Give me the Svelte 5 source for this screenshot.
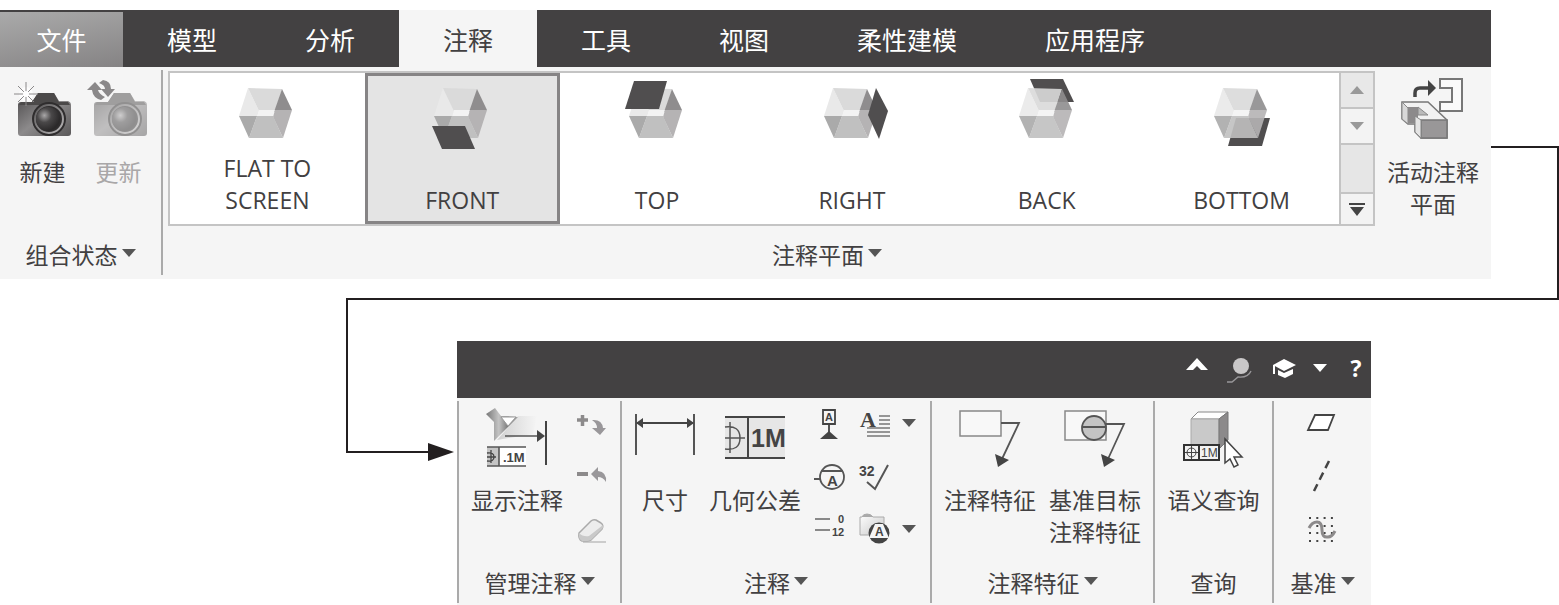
<script>
  const tabs = ["模型", "分析", "注释", "工具", "视图", "柔性建模", "应用程序"];

  // panel is the dark face, behind = drawn under the cube
  const planes = [
    { name: "FLAT TO SCREEN" },
    { name: "FRONT", panel: "6,50 39,50 49,73 16,73" },
    { name: "TOP", panel: "13,5 46,5 38,33 4,33" },
    { name: "RIGHT", panel: "60,12 72,35 63,63 52,39" },
    { name: "BACK", panel: "19,3 52,3 63,26 29,26", behind: true },
    { name: "BOTTOM", panel: "30,42 64,42 56,70 22,70", behind: true },
  ];

  let activeTab = $state("注释");
  let activePlane = $state("FRONT");
</script>

{#snippet caret()}
  <svg class="caret" viewBox="0 0 14 8"><path d="M0 0H14L7 8Z" /></svg>
{/snippet}

{#snippet caption(text, menu = true)}
  {#if menu}
    <button class="caption">{text}{@render caret()}</button>
  {:else}
    <div class="caption">{text}</div>
  {/if}
{/snippet}

{#snippet camera()}
  <path d="M7 29Q7 26 10 26H21L27 17H43L48 25H57Q60 26 60 29V57Q60 60 57 60H10Q7 60 7 57Z" fill="url(#camBody)" />
  <path d="M27 17H43L48 26H57L59 29H8L10 26H21Z" fill="#4b4949" />
  <circle cx="38" cy="43" r="17" fill="#2f2d2e" />
  <circle cx="38" cy="43" r="14" fill="none" stroke="url(#rim)" stroke-width="2" />
  <circle cx="37" cy="43" r="12" fill="url(#lens)" />
{/snippet}

<svg class="defs" aria-hidden="true">
  <defs>
    <linearGradient id="camBody" x1="0" y1="0" x2="1" y2="1">
      <stop offset="0" stop-color="#4a4849" />
      <stop offset="0.5" stop-color="#8c8a8b" />
      <stop offset="1" stop-color="#5a5859" />
    </linearGradient>
    <linearGradient id="rim" x1="0" y1="0" x2="1" y2="1">
      <stop offset="0" stop-color="#5a5859" />
      <stop offset="1" stop-color="#b9b7b8" />
    </linearGradient>
    <radialGradient id="lens" cx="0.35" cy="0.35" r="0.65">
      <stop offset="0" stop-color="#a9a7a8" />
      <stop offset="0.45" stop-color="#4a4849" />
      <stop offset="1" stop-color="#2b292a" />
    </radialGradient>
    <linearGradient id="torch">
      <stop offset="0" stop-color="#777" />
      <stop offset="0.4" stop-color="#c4c4c4" />
      <stop offset="0.7" stop-color="#777" />
      <stop offset="1" stop-color="#aaa" />
    </linearGradient>
    <linearGradient id="beam">
      <stop offset="0" stop-color="#d0d0d0" />
      <stop offset="1" stop-color="#f5f5f5" />
    </linearGradient>
    <linearGradient id="folder" x1="0" y1="0" x2="1" y2="1">
      <stop offset="0" stop-color="#fff" />
      <stop offset="1" stop-color="#c8c8c8" />
    </linearGradient>
  </defs>
</svg>

<div class="upper">
  <section class="ribbon">
    <nav class="bar">
      <button class="tab file">文件</button>
      {#each tabs as tab}
        <button class="tab" class:active={tab === activeTab} onclick={() => (activeTab = tab)}>{tab}</button>
      {/each}
    </nav>

    <div class="body">
      <div class="group states">
        <div class="tools">
          <button class="big">
            <svg viewBox="0 0 64 64" width="64" height="64">
              {@render camera()}
              <circle cx="15" cy="18" r="7" fill="#fff" opacity="0.8" />
              <path d="M15 6V30M3 18H27M7 10L23 26M23 10L7 26" stroke="#8a8889" stroke-width="1" />
              <circle cx="15" cy="18" r="3" fill="#fff" />
            </svg>
            <span>新建</span>
          </button>
          <button class="big" disabled>
            <svg viewBox="0 0 64 64" width="64" height="64">
              <g opacity="0.5">{@render camera()}</g>
              <g fill="#8a8889">
                <path d="M0 14L8 6L15 14H11Q12 18 18 21L14 24Q6 22 5 14Z" />
                <path d="M28 13L21 21L14 13H18Q18 9 12 7L16 4Q24 5 24 13Z" />
              </g>
            </svg>
            <span>更新</span>
          </button>
        </div>
        {@render caption("组合状态")}
      </div>

      <div class="group planes">
        <div class="tools">
          <div class="gallery">
            {#each planes as plane}
              <button
                class="plane"
                class:selected={plane.name === activePlane}
                onclick={() => (activePlane = plane.name)}
              >
                <svg viewBox="-2 0 76 76" width="76" height="76">
                  {#if plane.behind}
                    <polygon points={plane.panel} fill="#504e4f" />
                  {/if}
                  <g opacity={plane.behind ? 0.9 : 1}>
                    <path d="M17 12L28 35L26 41L8 40Z" fill="#e9e9e9" />
                    <path d="M17 12L51 13L44 35H28Z" fill="#dadada" />
                    <path d="M51 13L61 34L43 36Z" fill="#8f8d8e" />
                    <path d="M28 34H44L42 41H26Z" fill="#f3f3f3" />
                    <path d="M44 34H61L52 62L42 41Z" fill="#b5b3b4" />
                    <path d="M26 40H42L52 62H18Z" fill="#c0c0c0" />
                    <path d="M8 40H26L18 62Z" fill="#aaa" />
                  </g>
                  {#if plane.panel && !plane.behind}
                    <polygon points={plane.panel} fill="#504e4f" />
                  {/if}
                </svg>
                <span>{plane.name}</span>
              </button>
            {/each}
            <div class="scroll">
              <button class="up" aria-label="up"><svg viewBox="0 0 14 8"><path d="M0 8H14L7 0Z" /></svg></button>
              <button aria-label="down"><svg viewBox="0 0 14 8"><path d="M0 0H14L7 8Z" /></svg></button>
              <div class="track"></div>
              <button class="more" aria-label="more">
                <svg viewBox="0 0 16 13"><path d="M0 0H16V2H0ZM1 4H15L8 13Z" /></svg>
              </button>
            </div>
          </div>
          <button class="big current">
            <svg viewBox="0 0 72 64" width="72" height="64">
              <path d="M43 3H65V35H43V26H55V12H43Z" fill="#fafafa" stroke="#777" stroke-width="2" />
              <path d="M18 21V17Q18 12 23 12H32" fill="none" stroke="#444" stroke-width="3.5" />
              <path d="M31 4L39 12L31 20Z" fill="#444" />
              <path d="M5 26H31L50 44V62H24L18 56V48H11L5 43Z" fill="#f2f2f2" stroke="#777" stroke-width="1.5" />
              <path d="M5 26L11 32V48L5 43Z" fill="#d8d8d8" stroke="#888" />
              <path d="M11 31H21V42L18 47H11Z" fill="#8c8a8b" />
              <path d="M21 31L31 39H21Z" fill="#bbb" stroke="#888" />
              <path d="M24 44H50V62H24Z" fill="#999798" stroke="#777" stroke-width="1.5" />
              <path d="M18 40L24 44V62L18 56Z" fill="#e4e4e4" stroke="#888" />
            </svg>
            <span>活动注释<br />平面</span>
          </button>
        </div>
        {@render caption("注释平面")}
      </div>
    </div>
  </section>
  <div class="wire-out"></div>
</div>

<div class="lower">
  <div class="wire-in">
    <svg viewBox="0 0 26 18" width="26" height="18"><path d="M0 0L26 9L0 18Z" fill="#231f20" /></svg>
  </div>
  <section class="ribbon">
    <div class="bar icons">
      <button class="spaced" aria-label="collapse">
        <svg viewBox="0 0 30 30"><path d="M5 17L16 5L27 17H20L16 13L12 17Z" fill="#fff" /></svg>
      </button>
      <button class="spaced" aria-label="search">
        <svg viewBox="0 0 30 30">
          <circle cx="16" cy="13" r="8" fill="#c9c7c8" />
          <path d="M26 18Q23 25 13 24L7 29H2" fill="none" stroke="#99979a" stroke-width="1.4" />
        </svg>
      </button>
      <button aria-label="learning">
        <svg viewBox="0 0 30 30">
          <path d="M4 12L15 6L27 12L15 18Z" fill="#fff" />
          <path d="M9 17L15 20L24 16V21L16 25L9 22ZM4 12H6V21H4Z" fill="#fff" />
        </svg>
      </button>
      <button aria-label="options">
        <svg viewBox="0 0 30 30"><path d="M8 11H22L15 19Z" fill="#fff" /></svg>
      </button>
      <button class="help">?</button>
    </div>

    <div class="body sections">
      <div class="group">
        <div class="tools">
          <button class="big show">
            <svg viewBox="0 0 72 64" width="72" height="64">
              <path d="M37 9H56L52 27L16 33Z" fill="url(#beam)" />
              <path d="M5 7L14 1L20 9L37 10L13 34V15Z" fill="url(#torch)" />
              <path d="M20 10H35L27 19Z" fill="#fff" stroke="#999" />
              <path d="M24 29H57" stroke="#555" stroke-width="1.5" />
              <path d="M56 23L64 29L56 35Z" fill="#444" />
              <path d="M65 14V58" stroke="#444" stroke-width="2" />
              <path d="M6 40H45V59H6Z" fill="#fff" />
              <path d="M6 40H18V59H6Z" fill="#c4c4c4" />
              <path d="M6 40H45M6 59H45M18 40V59" stroke="#555" stroke-width="1.6" />
              <path d="M10 43V56M6 50H15M6 46Q13 45 13 50T6 54" fill="none" stroke="#444" stroke-width="1.3" />
              <text x="22" y="55" font-size="13" font-weight="bold">.1M</text>
            </svg>
            <span>显示注释</span>
          </button>
          <div class="small">
            <button aria-label="add">
              <svg viewBox="0 0 32 32">
                <path d="M2 13H13M7.500 8V19" stroke="#8c8a8b" stroke-width="3.500" />
                <path d="M17 13Q27 12 28 21H31L25 28L17 21H22Q22 16 17 13Z" fill="#99979a" />
              </svg>
            </button>
            <button aria-label="remove">
              <svg viewBox="0 0 32 32">
                <path d="M2 14H13" stroke="#8c8a8b" stroke-width="4" />
                <path d="M16 14L23 7V11Q32 12 31 22Q28 17 23 17V21Z" fill="#99979a" />
              </svg>
            </button>
            <button aria-label="erase">
              <svg viewBox="0 0 32 32">
                <path d="M8 29H31" stroke="#ccc" stroke-width="2" />
                <path d="M4 20L16 8Q18 6 21 7L26 10Q29 12 27 16L16 27Q14 28 12 28H7Q3 26 4 20Z" fill="#ececec" stroke="#aaa" stroke-width="1.500" />
                <path d="M4 20Q8 24 14 23L28 12Q29 14 27 16L16 27Q14 28 12 28H7Q3 26 4 20Z" fill="#c9c9c9" />
              </svg>
            </button>
          </div>
        </div>
        {@render caption("管理注释")}
      </div>

      <div class="group">
        <div class="tools">
          <button class="big dim">
            <svg viewBox="0 0 72 64" width="72" height="64">
              <path d="M7 7V48M65 7V48M8 16H64" stroke="#444" stroke-width="1.800" />
              <path d="M7 16L14 11V21ZM65 16L58 11V21Z" fill="#444" />
            </svg>
            <span>尺寸</span>
          </button>
          <button class="big gtol">
            <svg viewBox="0 0 72 64" width="72" height="64">
              <path d="M6 10H66V51H6Z" fill="#e6e6e6" />
              <path d="M6 10H66M6 51H66M29 10V51" stroke="#444" stroke-width="2" />
              <path d="M6 20Q21 18 21 31T6 42M11 15V46M6 31H26" fill="none" stroke="#555" stroke-width="1.500" />
              <text x="32" y="40" font-size="25" font-weight="bold">1M</text>
            </svg>
            <span>几何公差</span>
          </button>
          <div class="small three">
            <button aria-label="datum feature">
              <svg viewBox="0 0 32 32">
                <path d="M9 3H21V17H9ZM15 17V25" fill="none" stroke="#444" stroke-width="1.800" />
                <path d="M15 24L24 32H6Z" fill="#444" />
                <text x="11" y="14" font-size="11" font-weight="bold">A</text>
              </svg>
            </button>
            <button aria-label="note">
              <svg viewBox="0 0 32 32">
                <text class="serif" x="1" y="20" font-size="22" font-weight="bold">A</text>
                <path d="M20 9H31M20 13H31M20 17H31M8 21H31M8 25H31M8 29H31" stroke="#777" stroke-width="1.500" />
              </svg>
            </button>
            <button aria-label="note menu">{@render caret()}</button>
            <button aria-label="datum target">
              <svg viewBox="0 0 32 32">
                <circle cx="18" cy="17" r="12" fill="none" stroke="#555" stroke-width="1.800" />
                <path d="M0 19H6M7 11H29" stroke="#555" stroke-width="1.800" />
                <text x="13" y="26" font-size="15" font-weight="bold">A</text>
              </svg>
            </button>
            <button aria-label="surface finish">
              <svg viewBox="0 0 32 32">
                <text x="0" y="16" font-size="14" font-weight="bold">32</text>
                <path d="M8 22L16 29L29 5" fill="none" stroke="#555" stroke-width="2" />
              </svg>
            </button>
            <span></span>
            <button aria-label="ordinate">
              <svg viewBox="0 0 32 32">
                <path d="M1 6H16M1 17H16" stroke="#666" stroke-width="1.500" />
                <text x="24" y="10" font-size="11" font-weight="bold">0</text>
                <text x="18" y="23" font-size="11" font-weight="bold">12</text>
              </svg>
            </button>
            <button aria-label="symbol">
              <svg viewBox="0 0 32 32">
                <path d="M3 4Q4 1 8 1T14 4H25V22H1V4Z" fill="url(#folder)" stroke="#aaa" />
                <path d="M3 4Q4 1 8 1T14 4Z" fill="#aaa" />
                <circle cx="20" cy="20" r="10.500" fill="#444" />
                <path d="M16 11H24L30 25H10Z" fill="#f5f5f5" />
                <text x="16" y="23" font-size="12" font-weight="bold">A</text>
              </svg>
            </button>
            <button aria-label="symbol menu">{@render caret()}</button>
          </div>
        </div>
        {@render caption("注释")}
      </div>

      <div class="group">
        <div class="tools centered">
          <button class="big feature">
            <svg viewBox="0 0 72 64" width="72" height="64">
              <path d="M6 4H47V29H6Z" fill="#f8f8f8" stroke="#888" stroke-width="1.500" />
              <path d="M47 16H65L48 52" fill="none" stroke="#555" stroke-width="1.800" />
              <path d="M41 47L55 53L44 60Z" fill="#444" />
            </svg>
            <span>注释特征</span>
          </button>
          <button class="big feature">
            <svg viewBox="0 0 72 64" width="72" height="64">
              <path d="M6 4H47V33H6Z" fill="#f8f8f8" stroke="#888" stroke-width="1.500" />
              <circle cx="35" cy="21" r="12" fill="#c4c4c4" stroke="#555" stroke-width="1.800" />
              <path d="M23 20H47M47 17H65L49 52" fill="none" stroke="#555" stroke-width="1.800" />
              <path d="M42 47L56 53L45 60Z" fill="#444" />
            </svg>
            <span>基准目标<br />注释特征</span>
          </button>
        </div>
        {@render caption("注释特征")}
      </div>

      <div class="group">
        <div class="tools centered">
          <button class="big">
            <svg viewBox="0 0 72 64" width="72" height="64">
              <path d="M13 12L20 5H50L41 12Z" fill="#fff" stroke="#888" />
              <path d="M13 12H41V40H13Z" fill="#c9c9c9" stroke="#aaa" />
              <path d="M41 12L50 5V33L41 42Z" fill="#8c8a8b" stroke="#777" />
              <path d="M6 38H41V53H6ZM21 38V53" fill="#f2f2f2" stroke="#333" stroke-width="2" />
              <circle cx="13.500" cy="45.500" r="4.500" fill="none" stroke="#444" />
              <path d="M13.500 39V52M7 45.500H20" stroke="#444" />
              <text x="23" y="50" font-size="12">1M</text>
              <path d="M47 32V56L52 52L56 60L60 58L56 50H64Z" fill="#fff" stroke="#444" stroke-width="1.500" />
            </svg>
            <span>语义查询</span>
          </button>
        </div>
        {@render caption("查询", false)}
      </div>

      <div class="group">
        <div class="tools centered">
          <div class="small">
            <button aria-label="datum plane">
              <svg viewBox="0 0 32 32"><path d="M8 8H27L21 23H1Z" fill="#fff" stroke="#444" stroke-width="1.800" /></svg>
            </button>
            <button aria-label="datum axis">
              <svg viewBox="0 0 32 32"><path d="M22 1L7 31" stroke="#444" stroke-width="2.500" stroke-dasharray="8 5" /></svg>
            </button>
            <button aria-label="datum curve">
              <svg viewBox="0 0 32 32">
                <path d="M2 5H27M2 13H27M2 20H27M2 28H27" stroke="#444" stroke-width="2" stroke-dasharray="2 5.300" />
                <path d="M2 15Q5 9 10 9Q15 9 15 17T21 24Q25 24 28 18" fill="none" stroke="#8c8a8b" stroke-width="3" />
              </svg>
            </button>
          </div>
        </div>
        {@render caption("基准")}
      </div>
    </div>
  </section>
</div>

<style>
  :global(body) {
    background-color: #fff;
    color: #424041;
    font-family: "Open Sans", "Noto Sans CJK SC", sans-serif;
    font-size: 23px;
    line-height: 32px;
  }

  button {
    font: inherit;
    color: inherit;
    border: none;
    background: none;
    padding: 0;
    cursor: pointer;
  }

  svg {
    display: block;
    overflow: visible;
  }

  svg text {
    font-family: "Liberation Sans Narrow", "Liberation Sans", sans-serif;
    fill: #444;
  }

  svg .serif {
    font-family: "Liberation Serif", serif;
  }

  .defs {
    width: 0;
    height: 0;
  }

  .upper {
    display: flex;
    padding-top: 10px;
  }

  .ribbon {
    flex: 1;
    min-width: 0;
  }

  .upper .ribbon {
    padding-bottom: 19px;
  }

  /* connector between both halves of the ribbon */
  .wire-out {
    width: 66px;
    margin-top: 136px;
    border-top: 2px solid #231f20;
    border-right: 2px solid #231f20;
  }

  .lower {
    display: flex;
    margin-left: 346px;
    border-top: 2px solid #231f20;
  }

  .lower .ribbon {
    margin-top: 41px;
    margin-right: 188px;
  }

  .wire-in {
    width: 80px;
    height: 142px;
    padding-top: 9px;
    margin-right: 29px;
    border-left: 2px solid #231f20;
    border-bottom: 2px solid #231f20;
    display: flex;
    align-items: flex-end;
    justify-content: flex-end;
  }

  .wire-in svg {
    margin-right: -26px;
    margin-bottom: -10px;
  }

  .bar {
    display: flex;
    height: 57px;
    background-color: #434142;
  }

  .tab {
    padding: 2px 44px 0;
    font-size: 25px;
    color: #fff;
    white-space: nowrap;
  }

  .tab.file {
    width: 123px;
    padding: 0;
    margin-top: 2px;
    background: linear-gradient(170deg, #aaa, #858384);
  }

  .tab.active {
    color: #424041;
    background-color: #f5f5f5;
  }

  .icons {
    box-sizing: border-box;
    justify-content: flex-end;
    align-items: center;
    gap: 6px;
    padding-bottom: 4px;
  }

  .icons button {
    width: 30px;
    height: 32px;
  }

  .icons .spaced {
    margin-right: 8px;
  }

  .help {
    color: #fff;
    font-weight: bold;
  }

  .body {
    display: flex;
    padding: 3px 0 4px;
    background-color: #f5f5f5;
  }

  .sections {
    display: grid;
    grid-template-columns: 163fr 310fr 223fr 119fr 99fr;
    padding-bottom: 2px;
  }

  .group {
    display: flex;
    flex-direction: column;
    align-items: center;
    min-width: 0;
    padding-bottom: 4px;
  }

  .sections .group {
    border-left: 2px solid #aaa;
  }

  .states {
    width: 161px;
    border-right: 2px solid #aaa;
  }

  .planes {
    flex: 1;
  }

  .tools {
    display: flex;
    align-items: flex-start;
    width: 100%;
    height: 169px;
  }

  .lower .tools {
    height: 166px;
  }

  .centered {
    justify-content: center;
  }

  .states .tools {
    justify-content: center;
  }

  .big {
    display: flex;
    flex-direction: column;
    align-items: center;
    width: 76px;
    padding-top: 6px;
    gap: 16px;
    white-space: nowrap;
  }

  .lower .big {
    width: 105px;
    gap: 13px;
  }

  .big:disabled {
    color: #a9a7a8;
  }

  .upper .current {
    width: 116px;
  }

  .lower .show {
    width: 116px;
  }

  .lower .dim {
    width: 86px;
  }

  .lower .gtol {
    width: 94px;
  }

  .caption {
    display: flex;
    align-items: center;
    gap: 4px;
  }

  .caret {
    width: 14px;
    height: 8px;
    fill: #555;
  }

  .caption .caret {
    margin-bottom: 4px;
  }

  .gallery {
    flex: 1;
    display: grid;
    grid-template-columns: repeat(6, 1fr) 35px;
    height: 151px;
    margin: 1px 0 0 5px;
    border: 2px solid #c4c4c4;
    border-right-width: 1px;
    background-color: #fff;
  }

  .plane {
    display: flex;
    flex-direction: column;
    align-items: center;
    justify-content: space-between;
    padding: 3px 0 8px;
  }

  .plane.selected {
    padding: 0 0 5px;
    border: 3px solid #868485;
    background-color: #e4e4e4;
  }

  .plane span {
    width: 112px;
  }

  .scroll {
    display: flex;
    flex-direction: column;
    gap: 2px;
    padding: 0 1px 0 2px;
    background-color: #c4c4c4;
  }

  .scroll button {
    display: flex;
    align-items: center;
    justify-content: center;
    height: 34px;
    background-color: #f3f3f3;
  }

  .scroll svg {
    width: 14px;
    fill: #999;
  }

  .scroll .up {
    background-color: #e8e8e8;
  }

  .scroll .more {
    height: 30px;
  }

  .scroll .more svg {
    width: 16px;
    fill: #444;
  }

  .track {
    flex: 1;
    background-color: #e6e6e6;
  }

  .small {
    display: grid;
    grid-template-columns: 32px;
    grid-auto-rows: 32px;
    row-gap: 21px;
    padding-top: 6px;
  }

  .small.three {
    grid-template-columns: 34px 32px 14px;
    column-gap: 11px;
    padding-left: 12px;
  }

  .small svg:not(.caret) {
    width: 32px;
    height: 32px;
  }
</style>
